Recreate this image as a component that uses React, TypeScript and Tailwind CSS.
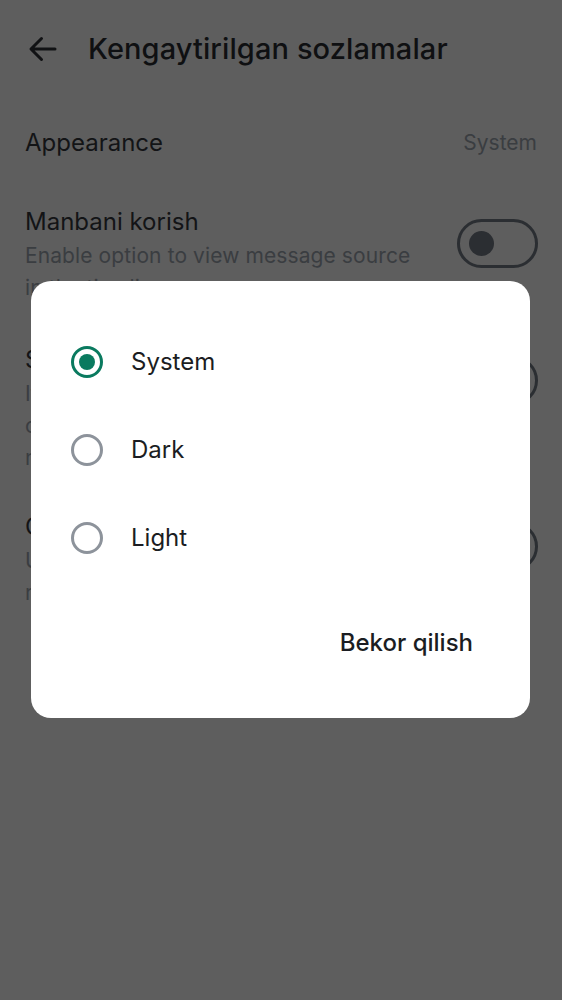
import React from "react";

function Toggle() {
  return (
    <div className="w-[81px] h-[49px] rounded-full border-[3px] border-[#2b2e32] flex items-center pl-[9px] shrink-0">
      <div className="w-[25px] h-[25px] rounded-full bg-[#2b2e32]" />
    </div>
  );
}

function Radio({ checked }: { checked: boolean }) {
  return checked ? (
    <div className="w-[32px] h-[32px] rounded-full border-[3px] border-[#0a7a5f] flex items-center justify-center">
      <div className="w-[16px] h-[16px] rounded-full bg-[#0a7a5f]" />
    </div>
  ) : (
    <div className="w-[32px] h-[32px] rounded-full border-[3px] border-[#8d939b]" />
  );
}

export default function App() {
  const font = { fontFamily: "Inter, 'Noto Sans', sans-serif" };
  return (
    <div
      className="relative w-[562px] h-[1000px] overflow-hidden bg-[#5e5e5e]"
      style={font}
    >
      {/* Header */}
      <div className="h-[98px] flex items-center pl-[25px]">
        <svg width="36" height="36" viewBox="0 0 24 24" fill="none">
          <path
            d="M20 12H4.5M11 5l-7 7 7 7"
            stroke="#111214"
            strokeWidth="2"
            strokeLinecap="round"
            strokeLinejoin="round"
          />
        </svg>
        <div className="ml-[27px] text-[29px] leading-[36px] font-medium tracking-[0.1px] text-[#0f1012]">
          Kengaytirilgan sozlamalar
        </div>
      </div>

      {/* List */}
      <div className="px-[25px]">
        <div className="mt-[27px] flex items-center justify-between">
          <div className="text-[24px] leading-[36px] text-[#131416]">Appearance</div>
          <div className="text-[21px] leading-[36px] text-[#3a3d41]">System</div>
        </div>

        <div className="mt-[43px] flex items-start justify-between">
          <div>
            <div className="text-[24px] leading-[36px] text-[#131416]">Manbani korish</div>
            <div className="text-[21px] leading-[32px] tracking-[0.1px] text-[#3a3d41]">
              Enable option to view message source
              <br />
              in the timeline
            </div>
          </div>
          <div className="mt-[15px] -mr-[1px]">
            <Toggle />
          </div>
        </div>

        <div className="mt-[38px] flex items-start justify-between">
          <div>
            <div className="text-[24px] leading-[36px] text-[#131416]">Share presence</div>
            <div className="text-[21px] leading-[32px] text-[#3a3d41]">
              If turned off, you won’t be able to send
              <br />
              or receive read receipts or typing
              <br />
              notifications
            </div>
          </div>
          <div className="mt-[14px] -mr-[1px]">
            <Toggle />
          </div>
        </div>

        <div className="mt-[35px] flex items-start justify-between">
          <div>
            <div className="text-[24px] leading-[36px] text-[#131416]">Compress media</div>
            <div className="text-[21px] leading-[32px] text-[#3a3d41]">
              Upload photos and videos faster and
              <br />
              reduce data usage
            </div>
          </div>
          <div className="mt-[13px] -mr-[1px]">
            <Toggle />
          </div>
        </div>
      </div>

      {/* Dialog */}
      <div className="absolute left-[31px] top-[281px] w-[499px] h-[437px] rounded-[20px] bg-white flex flex-col">
        <div className="pt-[37px] flex flex-col">
          {[
            { label: "System", checked: true },
            { label: "Dark", checked: false },
            { label: "Light", checked: false },
          ].map((o) => (
            <div key={o.label} className="h-[88px] flex items-center pl-[40px]">
              <Radio checked={o.checked} />
              <div className="ml-[28px] text-[24px] leading-[36px] text-[#1b1d22]">{o.label}</div>
            </div>
          ))}
        </div>
        <div className="mt-[43px] flex justify-end pr-[57px]">
          <div className="text-[24px] leading-[36px] font-medium text-[#1b1d22]">Bekor qilish</div>
        </div>
      </div>
    </div>
  );
}
